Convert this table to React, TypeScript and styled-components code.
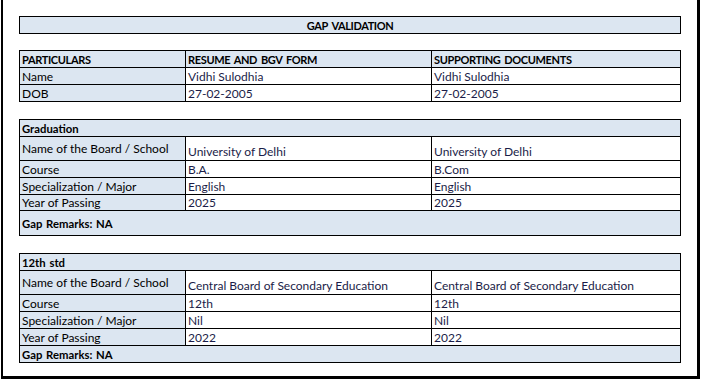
import React from "react";
import styled, { createGlobalStyle } from "styled-components";

const GlobalStyle = createGlobalStyle`
  html, body { margin: 0; padding: 0; background: #fff; }
  body { font-family: Lato, "Open Sans", "Liberation Sans", sans-serif; font-size: 12px; color: #000; }
  * { box-sizing: border-box; }
`;

const Page = styled.div`
  padding-left: 1px;
`;

const Frame = styled.div`
  width: 699px;
  height: 379px;
  border-left: 2px solid #000;
  border-right: 3px solid #000;
  border-bottom: 3px solid #000;
  padding: 16px 0 0 16px;
  display: flex;
  flex-direction: column;
`;

const TitleBox = styled.div`
  width: 662px;
  height: 18px;
  border: 1px solid #000;
  background: #dce6f1;
  font-size: 11px;
  font-weight: 700;
  letter-spacing: -0.4px;
  word-spacing: 2px;
  display: flex;
  align-items: center;
  justify-content: center;
  margin-bottom: 16px;
`;

const Block = styled.div<{ $gap?: number }>`
  width: 662px;
  border: 1px solid #000;
  margin-bottom: ${(p) => p.$gap ?? 0}px;
`;

const Row = styled.div<{ $h: number; $shade?: boolean; $first?: boolean }>`
  display: grid;
  grid-template-columns: 165px 246px 1fr;
  height: ${(p) => p.$h}px;
  border-top: ${(p) => (p.$first ? "none" : "1px solid #000")};
  background: ${(p) => (p.$shade ? "#dce6f1" : "#fff")};
`;

const FullRow = styled.div<{ $h: number; $first?: boolean }>`
  height: ${(p) => p.$h}px;
  border-top: ${(p) => (p.$first ? "none" : "1px solid #000")};
  background: #dce6f1;
  font-size: 11.3px;
  font-weight: 700;
  word-spacing: 1px;
  display: flex;
  align-items: center;
  padding-left: 2px;
`;

const Cell = styled.div<{ $bold?: boolean; $value?: boolean; $bottom?: boolean; $label?: boolean }>`
  display: flex;
  align-items: ${(p) => (p.$bottom ? "flex-end" : "center")};
  padding: 0 0 ${(p) => (p.$bottom ? "1px" : "0")} 2px;
  font-size: ${(p) => (p.$bold ? "11px" : "12px")};
  font-weight: ${(p) => (p.$bold ? 700 : 400)};
  letter-spacing: ${(p) => (p.$bold ? "-0.35px" : "normal")};
  word-spacing: ${(p) => (p.$bold ? "1.5px" : "normal")};
  color: ${(p) => (p.$value ? "#1b1d48" : "#000")};
  background: ${(p) => (p.$label ? "#dce6f1" : "transparent")};
  white-space: pre;
  overflow: hidden;
  & + & {
    border-left: 1px solid #000;
  }
`;

type Item = { label: string; a: string; b: string; h: number; bottom?: boolean };

const personal: Item[] = [
  { label: "Name", a: "Vidhi Sulodhia", b: "Vidhi Sulodhia", h: 16 },
  { label: "DOB", a: "27-02-2005", b: "27-02-2005", h: 16 },
];

const graduation: Item[] = [
  { label: "Name of the Board / School", a: "University of Delhi", b: "University of Delhi", h: 23, bottom: true },
  { label: "Course", a: "B.A.", b: "B.Com", h: 16 },
  { label: "Specialization / Major", a: "English", b: "English", h: 16 },
  { label: "Year of Passing", a: "2025", b: "2025", h: 15 },
];

const twelfth: Item[] = [
  { label: "Name of the Board / School", a: "Central Board of Secondary Education", b: "Central Board of Secondary Education", h: 23, bottom: true },
  { label: "Course", a: "12th", b: "12th", h: 16 },
  { label: "Specialization / Major", a: "Nil", b: "Nil", h: 16 },
  { label: "Year of Passing", a: "2022", b: "2022", h: 16 },
];

const DataRows: React.FC<{ items: Item[] }> = ({ items }) => (
  <>
    {items.map((it) => (
      <Row key={it.label} $h={it.h + 1}>
        <Cell $label>{it.label}</Cell>
        <Cell $value $bottom={it.bottom}>{it.a}</Cell>
        <Cell $value $bottom={it.bottom}>{it.b}</Cell>
      </Row>
    ))}
  </>
);

export default function App() {
  return (
    <Page>
      <GlobalStyle />
      <Frame>
        <TitleBox>GAP VALIDATION</TitleBox>

        <Block $gap={17}>
          <Row $h={16} $shade $first>
            <Cell $bold>PARTICULARS</Cell>
            <Cell $bold>RESUME AND BGV FORM</Cell>
            <Cell $bold>SUPPORTING DOCUMENTS</Cell>
          </Row>
          <DataRows items={personal} />
        </Block>

        <Block $gap={17}>
          <FullRow $h={16} $first>Graduation</FullRow>
          <DataRows items={graduation} />
          <FullRow $h={25}>Gap Remarks: NA</FullRow>
        </Block>

        <Block>
          <FullRow $h={16} $first>12th std</FullRow>
          <DataRows items={twelfth} />
          <FullRow $h={17}>Gap Remarks: NA</FullRow>
        </Block>
      </Frame>
    </Page>
  );
}
